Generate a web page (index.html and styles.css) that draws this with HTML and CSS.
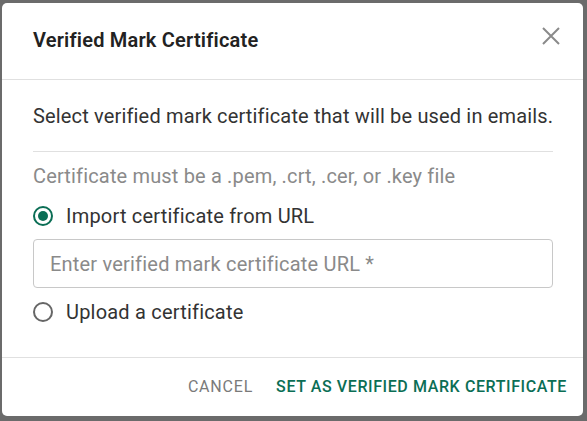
FILE: index.html
```html
<!DOCTYPE html>
<html>
<head>
<meta charset="utf-8">
<link rel="stylesheet" href="styles.css">
</head>
<body>
<div class="backdrop">
  <div class="dialog">
    <div class="header">
      <h2 class="title">Verified Mark Certificate</h2>
      <button class="close" aria-label="Close">
        <svg width="20" height="20" viewBox="0 0 20 20"><path d="M2 2 L18 18 M18 2 L2 18" stroke="#8a8a8a" stroke-width="2" fill="none"/></svg>
      </button>
    </div>
    <div class="body">
      <p class="intro">Select verified mark certificate that will be used in emails.</p>
      <div class="sep"></div>
      <p class="hint">Certificate must be a .pem, .crt, .cer, or .key file</p>
      <label class="radio-row first">
        <span class="radio checked"></span>
        <span class="radio-label">Import certificate from URL</span>
      </label>
      <div class="field">Enter verified mark certificate URL *</div>
      <label class="radio-row">
        <span class="radio"></span>
        <span class="radio-label">Upload a certificate</span>
      </label>
    </div>
    <div class="footer">
      <button class="btn cancel">CANCEL</button>
      <button class="btn primary">SET AS VERIFIED MARK CERTIFICATE</button>
    </div>
  </div>
</div>
</body>
</html>
```
FILE: styles.css
```css
html, body {
  margin: 0;
  padding: 0;
  height: 100%;
}
body {
  font-family: Roboto, "Liberation Sans", sans-serif;
  background: #6b6b6b;
}
.backdrop {
  height: 100%;
  padding: 3px 4px 5px 2px;
  box-sizing: border-box;
}
.dialog {
  background: #fff;
  border-radius: 5px;
  height: 100%;
  display: flex;
  flex-direction: column;
  box-sizing: border-box;
}
.header {
  display: flex;
  align-items: center;
  justify-content: space-between;
  height: 77px;
  padding: 0 22px 0 31px;
  border-bottom: 1px solid #e0e0e0;
  box-sizing: border-box;
}
.title {
  margin: -2px 0 0;
  font-size: 20px;
  letter-spacing: 0.2px;
  font-weight: 600;
  color: #222;
}
.close {
  border: 0;
  background: none;
  padding: 0;
  width: 20px;
  height: 20px;
  margin-top: -11px;
  cursor: pointer;
}
.close svg { display: block; }
.body {
  flex: 1;
  padding: 0 30px 0 31px;
  white-space: nowrap;
}
.intro {
  margin: 23px 0 0;
  font-size: 20px;
  letter-spacing: 0.16px;
  line-height: 26px;
  color: #333;
}
.sep {
  height: 1px;
  background: #e0e0e0;
  margin-top: 22px;
}
.hint {
  margin: 11px 0 0;
  font-size: 20px;
  letter-spacing: 0.16px;
  line-height: 26px;
  color: #8a8a8a;
}
.radio-row {
  display: flex;
  align-items: center;
  gap: 13px;
  height: 26px;
  margin-top: 11px;
  font-size: 20px;
  letter-spacing: 0.2px;
  color: #333;
}
.radio-row.first {
  margin-top: 14px;
}
.radio {
  width: 20px;
  height: 20px;
  border: 2px solid #666;
  border-radius: 50%;
  box-sizing: border-box;
  display: flex;
  align-items: center;
  justify-content: center;
  flex-shrink: 0;
}
.radio.checked {
  border-color: #0b6e55;
}
.radio.checked::after {
  content: "";
  width: 10px;
  height: 10px;
  border-radius: 50%;
  background: #0b6e55;
}
.field {
  margin-top: 10px;
  height: 49px;
  border: 1px solid #c8c8c8;
  border-radius: 4px;
  box-sizing: border-box;
  padding: 0 16px;
  display: flex;
  align-items: center;
  font-size: 20px;
  letter-spacing: 0.2px;
  color: #8a8a8a;
}
.footer {
  display: flex;
  justify-content: flex-end;
  align-items: center;
  gap: 23px;
  height: 59px;
  padding: 0 16px 1px 0;
  box-sizing: border-box;
  border-top: 1px solid #e0e0e0;
}
.btn {
  border: 0;
  background: none;
  padding: 0;
  font-family: inherit;
  font-size: 16px;
  font-weight: 500;
  letter-spacing: 0.6px;
  cursor: pointer;
}
.cancel { color: #7a7a7a; font-weight: 400; letter-spacing: 0.8px; }
.primary { color: #0b6e55; }
```
